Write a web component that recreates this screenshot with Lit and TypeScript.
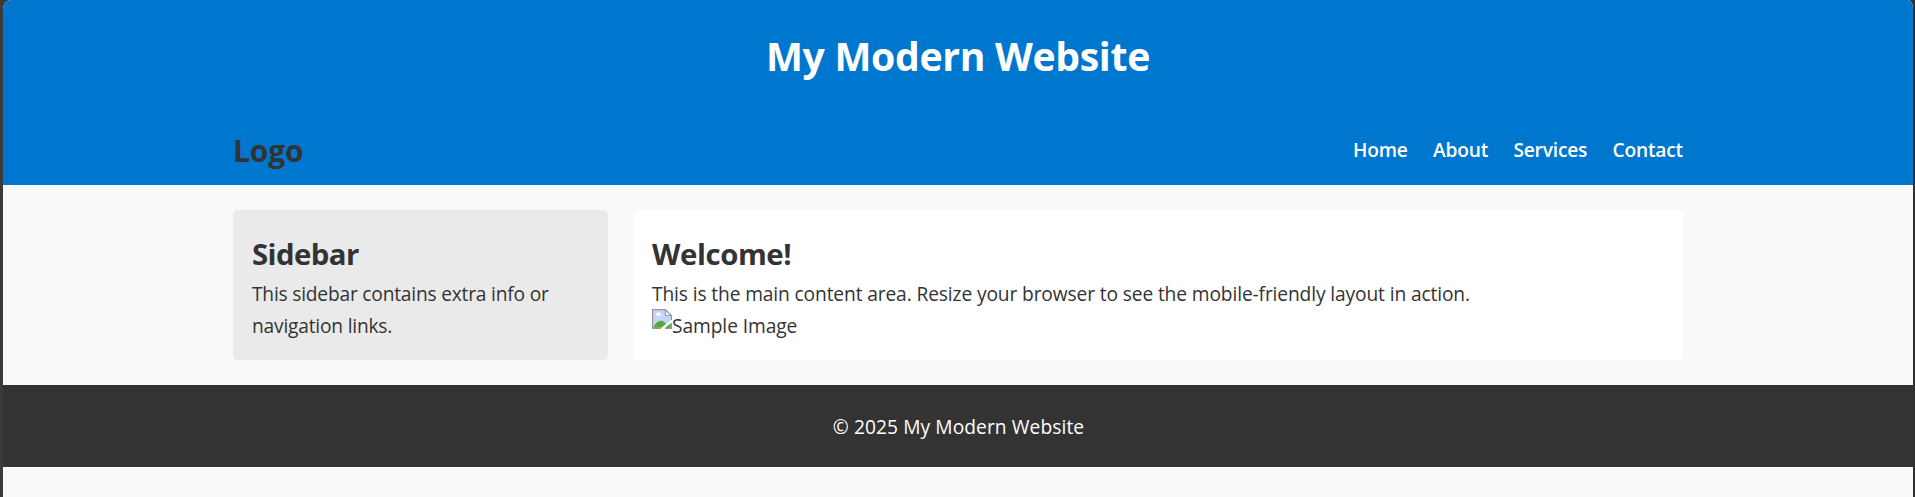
import { LitElement, html, css } from "lit";
import { customElement } from "lit/decorators.js";

@customElement("app-root")
class AppRoot extends LitElement {
  static styles = css`
    * { box-sizing: border-box; margin: 0; }
    :host {
      display: block;
      height: 497px;
      padding: 0 2px 0 3px;
      overflow: hidden;
      background: linear-gradient(90deg, #3b3b3b 50%, #303030 50%);
      color: #333;
      font: 19.2px/32px "Open Sans", "Noto Sans", sans-serif;
    }
    .page {
      height: 497px;
      background: #f9f9f9;
      border-radius: 8px 5px 0 0 / 9px 8px 0 0;
      overflow: hidden;
    }
    .header { height: 185px; padding-top: 24px; background: #0077ce; color: #fff; }
    .title {
      text-align: center;
      font-size: 39.2px;
      line-height: 64px;
      font-weight: 700;
      letter-spacing: -0.34px;
    }
    .nav {
      display: flex;
      justify-content: space-between;
      align-items: center;
      width: 1450px;
      margin: 29px auto 0;
      padding: 10px 0;
    }
    .logo { color: #333; font-size: 30px; line-height: 48px; font-weight: 700; letter-spacing: -0.16px; }
    .links { display: flex; gap: 25.3px; padding-bottom: 2px; font-weight: 600; letter-spacing: -0.2px; }
    .columns {
      display: grid;
      grid-template-columns: 375px 1050px;
      gap: 25px;
      width: 1450px;
      margin: 25px auto;
    }
    .card { height: 150px; padding: 20px 19px 18px; border-radius: 5px; background: #fff; }
    .side { background: #eaeaea; letter-spacing: -0.208px; }
    .main { letter-spacing: -0.126px; }
    .card h2 { font-size: 29.4px; line-height: 48px; font-weight: 700; }
    .side h2 { letter-spacing: -0.58px; }
    .main h2 { letter-spacing: -0.43px; }
    .picture { display: flex; letter-spacing: -0.08px; }
    .picture svg { flex: none; margin-top: -1px; }
    .footer {
      height: 82px;
      padding: 26px 24px 24px 25px;
      background: #333;
      color: #fff;
      text-align: center;
      letter-spacing: 0.08px;
    }
  `;

  render() {
    return html`
      <div class="page">
        <header class="header">
          <h1 class="title">My Modern Website</h1>
          <nav class="nav">
            <div class="logo">Logo</div>
            <div class="links">
              ${["Home", "About", "Services", "Contact"].map((t) => html`<span>${t}</span>`)}
            </div>
          </nav>
        </header>
        <div class="columns">
          <aside class="card side">
            <h2>Sidebar</h2>
            <p>This sidebar contains extra info or navigation links.</p>
          </aside>
          <main class="card main">
            <h2>Welcome!</h2>
            <p>This is the main content area. Resize your browser to see the mobile-friendly layout in action.</p>
            <div class="picture">
              <svg width="20" height="20" viewBox="0 0 20 20">
                <path d="M.6 .6H13.5L19.4 6.5V11L9 19.4H.6Z" fill="#c3d6f7" />
                <path d="M3 6.6C3 5 4.6 4.7 5 4.8C5.5 3 8.3 3.2 8.5 5C10 5 10 6.6 9 6.6Z" fill="#fff" />
                <path d="M1.2 18.8C3 13.5 8 10.5 11 12.2C12.5 12.8 13.3 14 13.8 15L9 18.8Z" fill="#54ab35" />
                <path d="M9 19.4H.6V.6H13.5L19.4 6.5V11" fill="none" stroke="#999" stroke-width="1.2" />
                <path d="M13.4 .8V6.5H19.2Z" fill="#fff" stroke="#999" stroke-width="1.1" />
                <path d="M13 19L18.8 14V19Z" fill="#54ab35" />
                <path d="M13 19.4H19.4V14" fill="none" stroke="#999" stroke-width="1.2" />
              </svg>
              <span>Sample Image</span>
            </div>
          </main>
        </div>
        <footer class="footer">© 2025 My Modern Website</footer>
      </div>
    `;
  }
}
